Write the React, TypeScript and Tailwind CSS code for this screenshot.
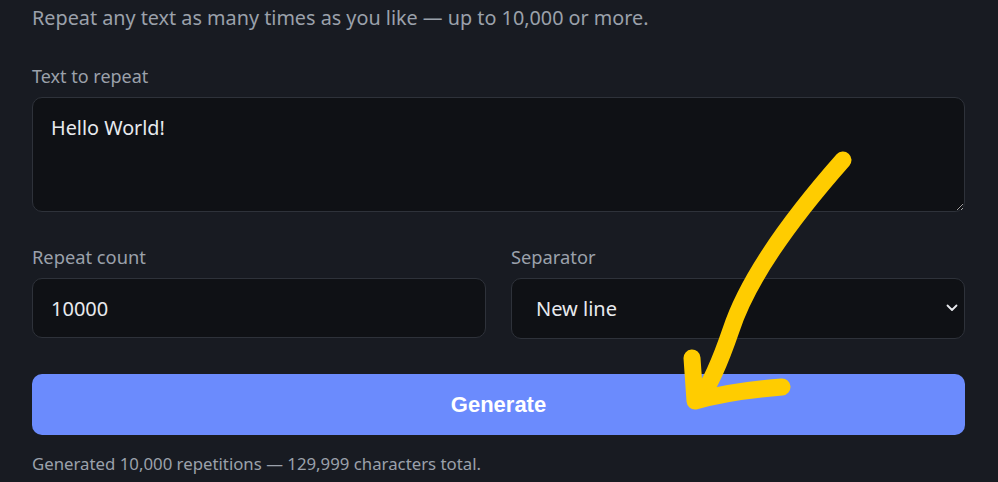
import React from "react";

export default function App() {
  const font = { fontFamily: '"Noto Sans", "Segoe UI", sans-serif' };
  return (
    <div className="relative w-[998px] h-[482px] overflow-hidden bg-[#181b22]" style={font}>
      <div className="pl-[32px] pr-[33px] pt-[4px] flex flex-col">
        <p className="text-[19.8px] leading-[27px] whitespace-nowrap text-[#9ba1ab]">
          Repeat any text as many times as you like — up to 10,000 or more.
        </p>
        <label className="mt-[33px] mb-[9px] text-[18px] leading-[24px] text-[#9ba1ab]">Text to repeat</label>
        <textarea
          className="h-[115px] w-full rounded-[10px] border border-[#2e323a] bg-[#0f1115] px-[18px] py-[16px] text-[19.8px] leading-[28px] text-[#e8eaee] outline-none"
          defaultValue="Hello World!"
          style={font}
        />
        <div className="mt-[33px] grid grid-cols-2 gap-[25px]">
          <div className="flex flex-col">
            <label className="mb-[9px] text-[18.3px] leading-[24px] text-[#9ba1ab]">Repeat count</label>
            <input
              className="h-[60px] rounded-[10px] border border-[#2e323a] bg-[#0f1115] px-[18px] text-[20px] text-[#e8eaee] outline-none"
              defaultValue="10000"
              style={font}
            />
          </div>
          <div className="flex flex-col">
            <label className="mb-[9px] text-[18.3px] leading-[24px] text-[#9ba1ab]">Separator</label>
            <div className="relative h-[61px] rounded-[10px] border border-[#2e323a] bg-[#0f1115] flex items-center pl-[24px] text-[20px] text-[#e8eaee]">
              New line
              <svg className="absolute right-[6px] top-[24px]" width="12" height="10" viewBox="0 0 12 10" fill="none">
                <path d="M1.5 2.5 L6 7 L10.5 2.5" stroke="#e8eaee" strokeWidth="1.8" strokeLinecap="round" strokeLinejoin="round" />
              </svg>
            </div>
          </div>
        </div>
        <button
          className="mt-[35px] h-[61px] w-full rounded-[10px] bg-[#6b8bfd] text-[22px] font-bold text-white"
          style={{ fontFamily: '"Liberation Sans", Arial, sans-serif' }}
        >
          Generate
        </button>
        <p className="mt-[18px] text-[16.8px] leading-[22px] whitespace-nowrap text-[#9ba1ab]">
          Generated 10,000 repetitions — 129,999 characters total.
        </p>
      </div>
      <svg className="absolute left-0 top-0 pointer-events-none" width="998" height="482" viewBox="0 0 998 482" fill="none">
        <path
          d="M843 160 C 790 220 748 278 731 330 C 720 362 710 385 700 398"
          stroke="#ffcc00"
          strokeWidth="17"
          strokeLinecap="round"
          strokeLinejoin="round"
        />
        <path
          d="M692 358 L 695 401 Q 730 391 782 387"
          stroke="#ffcc00"
          strokeWidth="17"
          strokeLinecap="round"
          strokeLinejoin="round"
        />
      </svg>
    </div>
  );
}
